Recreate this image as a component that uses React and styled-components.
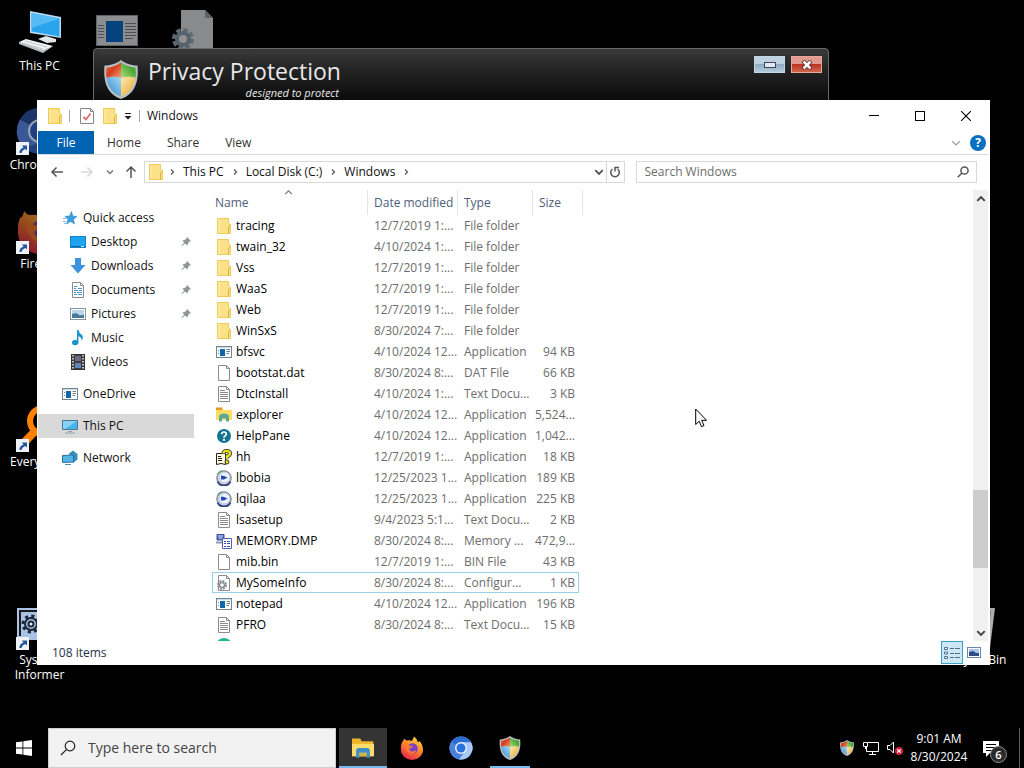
import React from 'react'
import styled, { createGlobalStyle } from 'styled-components'

const GlobalStyle = createGlobalStyle`
  * {
    box-sizing: border-box;
  }

  body {
    margin: 0;
    background: #000;
    overflow: hidden;
  }

  body, button, input, table {
    font-family: 'Segoe UI', 'Open Sans', sans-serif;
    font-size: 12px;
    line-height: 16px;
  }

  button {
    padding: 0;
    border: 0;
    background: none;
    color: inherit;
  }

  svg {
    display: block;
    flex: none;
  }
`

/* ---------- desktop ---------- */

const Screen = styled.div`
  height: 100vh;
  display: flex;
  flex-direction: column;
  background: #000;
`

const Desktop = styled.main`
  position: relative;
  flex: 1;
  min-height: 0;
  overflow: hidden;
`

const ShortcutGrid = styled.div`
  display: grid;
  grid-template-columns: 77px 77px 77px 1fr 76px;
  grid-auto-rows: 99px;
  padding: 8px 11px 0 1px;
`

const Shortcut = styled.button`
  grid-column: ${p => p.$col};
  grid-row: ${p => p.$row};
  display: flex;
  flex-direction: column;
  align-items: center;
  gap: 2px;
  align-self: start;
  color: #fff;
  line-height: 15px;
`

const ShortcutPicture = styled.span`
  position: relative;
  width: 48px;
  height: 48px;
`

const ShortcutArt = styled.span`
  display: block;
  opacity: ${p => (p.$faded ? 0.6 : 1)};
`

const LinkBadge = styled.span`
  position: absolute;
  left: 0;
  bottom: 0;
  width: 13px;
  height: 13px;
  background: #eef1f6;
`

/* ---------- privacy protection window ---------- */

const PrivacyWindow = styled.section`
  position: absolute;
  left: 93px;
  right: 195px;
  top: 48px;
  height: 120px;
  display: flex;
  align-items: flex-start;
  padding: 7px 6px 0 10px;
  border: 1px solid #6a6a6a;
  border-radius: 4px;
  background: linear-gradient(#3a3a3a, #242424 20px, #0c0c0c 50px);
`

const Brand = styled.div`
  flex: 1;
  display: flex;
  align-items: flex-start;
  gap: 10px;
`

const BrandText = styled.div`
  display: flex;
  flex-direction: column;
  color: #e8e8e8;
`

const BrandTitle = styled.h1`
  margin: 0;
  font-size: 23px;
  font-weight: 400;
  line-height: 30px;
`

const Tagline = styled.span`
  align-self: flex-end;
  padding-right: 2px;
  font-size: 11px;
  font-style: italic;
  line-height: 14px;
`

const GlassButton = styled.button`
  width: 31px;
  height: 17px;
  margin-left: 6px;
  display: flex;
  align-items: center;
  justify-content: center;
  border: 1px solid ${p => (p.$danger ? '#e9a79c' : '#c4d6e6')};
  background: ${p => (p.$danger
    ? 'linear-gradient(#e29a90 0 45%, #b93520 50%, #d4654f)'
    : 'linear-gradient(#bdd1e2 0 45%, #8fabc3 50%, #b4cbdd)')};
`

/* ---------- explorer window ---------- */

const ExplorerWindow = styled.section`
  position: absolute;
  left: 37px;
  right: 34px;
  top: 100px;
  bottom: 63px;
  display: flex;
  flex-direction: column;
  padding: 0 1px;
  background: #fff;
  color: #111;
`

const TitleBar = styled.header`
  height: 31px;
  display: flex;
  align-items: center;
`

const QuickTools = styled.div`
  flex: 1;
  display: flex;
  align-items: center;
  padding-left: 10px;
`

const Divider = styled.span`
  width: 1px;
  height: 12px;
  margin: ${p => p.$space || '0 7px'};
  background: #a6a6a6;
`

const ToolButton = styled.button`
  margin-right: ${p => p.$after || '0'};
`

const WindowTitle = styled.h2`
  margin: 0;
  font-size: 12px;
  font-weight: 400;
`

const CaptionButton = styled.button`
  width: 46px;
  height: 30px;
  display: flex;
  align-items: center;
  justify-content: center;
`

const Ribbon = styled.nav`
  height: 24px;
  display: flex;
  align-items: stretch;
  border-bottom: 1px solid #dedede;
`

const Tab = styled.button`
  padding: 0 13px;
  color: #333;
`

const FileTab = styled(Tab)`
  width: 56px;
  background: #0063b1;
  color: #fff;
`

const RibbonEnd = styled.div`
  flex: 1;
  display: flex;
  align-items: center;
  justify-content: flex-end;
  gap: 9px;
  padding-right: 3px;
`

const HelpButton = styled.button`
  width: 16px;
  height: 16px;
  border-radius: 50%;
  background: #0b6fc2;
  color: #fff;
  font-weight: 700;
`

const NavBar = styled.div`
  height: 35px;
  display: flex;
  align-items: center;
  padding: 0 12px 2px 12px;
`

const NavButton = styled.button`
  width: 14px;
  margin-right: ${p => p.$after || 0}px;
  display: flex;
  justify-content: center;
`

const AddressBar = styled.div`
  flex: 1 1 480px;
  height: 22px;
  display: flex;
  align-items: center;
  padding-left: 4px;
  border: 1px solid #d9d9d9;
`

const Crumbs = styled.div`
  flex: 1;
  display: flex;
  align-items: center;
  gap: 7px;
  padding-left: 5px;
`

const Fill = styled.span`
  flex: 1;
`

const RefreshButton = styled.button`
  width: 18px;
  height: 100%;
  margin-left: 2px;
  display: flex;
  align-items: center;
  justify-content: center;
  border-left: 1px solid #d9d9d9;
`

const FolderSearch = styled.label`
  flex: 1 1 341px;
  height: 22px;
  margin-left: 11px;
  display: flex;
  align-items: center;
  padding: 0 7px 0 8px;
  border: 1px solid #d9d9d9;
`

const SearchInput = styled.input`
  flex: 1;
  min-width: 0;
  padding: 0;
  border: 0;
  outline: 0;
  background: none;

  &::placeholder {
    color: #6d6d6d;
    opacity: 1;
  }
`

const Body = styled.div`
  flex: 1;
  min-height: 0;
  display: flex;
  overflow: hidden;
`

const Sidebar = styled.nav`
  width: 156px;
  margin-right: 18px;
  padding-top: 16px;
`

const Group = styled.div`
  margin-bottom: 8px;
`

const Place = styled.a`
  height: 24px;
  display: flex;
  align-items: center;
  gap: 5px;
  padding: 0 2px 0 ${p => (p.$nested ? 32 : 24)}px;
  background: ${p => (p.$active ? '#d9d9d9' : 'none')};
  color: #111;
  text-decoration: none;
`

const PlaceName = styled.span`
  flex: 1;
`

const FilePane = styled.div`
  flex: 1;
  min-width: 0;
  overflow: hidden;
`

const FileTable = styled.table`
  table-layout: fixed;
  width: 367px;
  border-collapse: separate;
  border-spacing: 0;
`

const HeadCell = styled.th`
  position: relative;
  width: ${p => p.$width}px;
  height: 25px;
  padding: 0 0 0 ${p => p.$indent || 6}px;
  color: #4c607a;
  font-weight: 400;
  text-align: left;
  white-space: nowrap;

  &::after {
    content: '';
    position: absolute;
    top: 0;
    bottom: 0;
    right: 0;
    border-right: 1px solid #e5e5e5;
  }

  &:last-child::after {
    right: -4px;
  }
`

const SortMark = styled.span`
  position: absolute;
  top: -2px;
  left: 72px;
`

const Cell = styled.td`
  height: 21px;
  padding: 0 0 0 6px;
  color: #6d6d6d;
  white-space: nowrap;
`

const NameCell = styled(Cell)`
  padding-left: 4px;
  color: #000;
`

const SizeCell = styled(Cell)`
  padding: 0 4px 0 0;
  text-align: right;
`

const FileName = styled.span`
  display: flex;
  align-items: center;
  gap: 4px;
`

const FileIcon = styled.span`
  width: 16px;
  height: 16px;
  display: flex;
  justify-content: center;
`

const Row = styled.tr`
  outline: ${p => (p.$focused ? '1px solid #99d1e8' : 'none')};
  outline-offset: -1px;
`

const ScrollBar = styled.div`
  width: 15px;
  display: flex;
  flex-direction: column;
  margin-right: 1px;
  background: #f0f0f0;
`

const ScrollArrow = styled.button`
  height: 17px;
  display: flex;
  align-items: center;
  justify-content: center;
`

const Track = styled.div`
  flex: 1;
  display: grid;
  grid-template-rows: 5fr 78px 1fr;
`

const Thumb = styled.div`
  grid-row: 2;
  background: #cdcdcd;
`

const StatusBar = styled.footer`
  height: 24px;
  display: flex;
  align-items: flex-start;
  padding: 0 4px 0 14px;
  color: #26324a;
  line-height: 24px;
`

const ViewButton = styled.button`
  width: 22px;
  height: 23px;
  display: flex;
  align-items: center;
  justify-content: center;
  border: 1px solid ${p => (p.$active ? '#3aa0c4' : 'transparent')};
  background: ${p => (p.$active ? '#cce8f6' : 'none')};
`

const Pointer = styled.span`
  position: absolute;
  left: 695px;
  top: 408px;
`

/* ---------- taskbar ---------- */

const Taskbar = styled.footer`
  height: 40px;
  display: flex;
  align-items: stretch;
  color: #fff;
`

const StartButton = styled.button`
  width: 48px;
  display: flex;
  align-items: center;
  justify-content: center;
`

const TaskSearch = styled.label`
  width: 288px;
  display: flex;
  align-items: center;
  gap: 12px;
  padding: 0 11px;
  border: 1px solid #cfcfcf;
  background: #f2f2f2;
  margin-right: 3px;

  input {
    font-size: 14px;
    line-height: 20px;
  }

  input::placeholder {
    color: #444;
  }
`

const Apps = styled.div`
  flex: 1;
  display: flex;
  gap: 1px;
`

const AppButton = styled.button`
  position: relative;
  width: 48px;
  display: flex;
  align-items: center;
  justify-content: center;
  background: ${p => (p.$active ? '#343434' : 'none')};

  &::after {
    content: '';
    position: absolute;
    left: ${p => (p.$active ? 0 : 4)}px;
    right: ${p => (p.$active ? 0 : 4)}px;
    bottom: 0;
    height: 2px;
    background: ${p => (p.$open ? '#76b9ed' : 'none')};
  }
`

const TrayButton = styled.button`
  width: 24px;
  display: flex;
  align-items: center;
  justify-content: center;
`

const Clock = styled.button`
  width: 64px;
  line-height: 18px;
`

const NoticeButton = styled.button`
  position: relative;
  width: 48px;
  padding-left: 12px;
`

const NoticeCount = styled.span`
  position: absolute;
  left: 19px;
  top: 18px;
  width: 17px;
  height: 17px;
  border: 1px solid #8a8a8a;
  border-radius: 50%;
  background: #2b2b2b;
  font-size: 11px;
  font-weight: 600;
  line-height: 15px;
`

const ShowDesktop = styled.button`
  width: 5px;
  border-left: 1px solid #5c5c5c;
`

/* ---------- drawings ---------- */

const Shield = ({ width, height }) => (
  <svg width={width} height={height} viewBox='0 0 34 39'>
    <defs>
      <clipPath id='shield-clip'>
        <path d='M17 2.500C22 6 27 7.500 31.500 7.500C33 21 29 32 17 36.500C5 32 1 21 2.500 7.500C7 7.500 12 6 17 2.500Z' />
      </clipPath>
      <linearGradient id='shield-red' x1='0' y1='0' x2='1' y2='1'>
        <stop offset='0' stopColor='#e98a72' /><stop offset='.5' stopColor='#d43c1c' /><stop offset='1' stopColor='#f5a27b' />
      </linearGradient>
      <linearGradient id='shield-green' x1='0' y1='1' x2='1' y2='0'>
        <stop offset='0' stopColor='#b2e08a' /><stop offset='.6' stopColor='#46a52b' /><stop offset='1' stopColor='#77bd4e' />
      </linearGradient>
      <linearGradient id='shield-blue' x1='1' y1='0' x2='0' y2='1'>
        <stop offset='0' stopColor='#a7daf5' /><stop offset='1' stopColor='#1977c2' />
      </linearGradient>
      <linearGradient id='shield-yellow' x1='0' y1='0' x2='1' y2='1'>
        <stop offset='0' stopColor='#fbeab0' /><stop offset='1' stopColor='#e69a1b' />
      </linearGradient>
    </defs>
    <path d='M17 0C22 4 28 5.500 33.500 5.500C35 22 31 34 17 39C3 34 -1 22 .5 5.500C6 5.500 12 4 17 0Z' fill='#b8c0c6' />
    <g clipPath='url(#shield-clip)'>
      <path d='M0 0H17V18Q8 15 0 19Z' fill='url(#shield-red)' />
      <path d='M17 0H34V19Q26 15 17 18Z' fill='url(#shield-green)' />
      <path d='M0 19Q8 15 17 18V39H0Z' fill='url(#shield-blue)' />
      <path d='M17 18Q26 15 34 19V39H17Z' fill='url(#shield-yellow)' />
    </g>
  </svg>
)

const Folder = () => (
  <svg width='14' height='16' viewBox='0 0 14 16'>
    <path d='M.5 .5H11.500V5L13.500 6.500V15.500H.5Z' fill='#fbe187' stroke='#efcb59' />
    <path d='M11.500 9V15.500M11.500 9L13.500 7' fill='none' stroke='#dcb23e' />
    <path d='M2 1V15' stroke='#fdeeb0' />
  </svg>
)

const PageShape = ({ children }) => (
  <svg width='16' height='16' viewBox='0 0 16 16'>
    <path d='M2.500 .5H10.500L13.500 3.500V15.500H2.500Z' fill='#fff' stroke='#8c8c8c' />
    <path d='M10.500 .5V3.500H13.500' fill='none' stroke='#8c8c8c' />
    {children}
  </svg>
)

const TextFile = () => (
  <PageShape>
    <path d='M4 4.500H9M4 6.500H12M4 8.500H12M4 10.500H12M4 12.500H12' stroke='#8a8a8a' />
  </PageShape>
)

const Gear = ({ size, fill, hole }) => (
  <svg width={size} height={size} viewBox='0 0 20 20'>
    <circle cx='10' cy='10' r='8' fill='none' stroke={fill} strokeWidth='3' strokeDasharray='3.140 3.140' />
    <circle cx='10' cy='10' r='6' fill={hole} stroke={fill} strokeWidth='2' />
    <circle cx='10' cy='10' r='2.500' fill='#e8eef6' stroke={fill} strokeWidth='2' />
  </svg>
)

const ConfigFile = () => (
  <PageShape>
    <circle cx='6' cy='10' r='4' fill='none' stroke='#8a9299' strokeWidth='2' strokeDasharray='2 1.140' />
    <circle cx='6' cy='10' r='2.500' fill='#fff' stroke='#8a9299' strokeWidth='1.500' />
  </PageShape>
)

const AppFile = () => (
  <svg width='16' height='16' viewBox='0 0 16 16'>
    <rect x='.5' y='2.500' width='15' height='11' fill='#fff' stroke='#6f8797' />
    <path d='M1 3.500H15' stroke='#cfd9e0' />
    <rect x='4' y='5' width='5' height='7' fill='#0f66a8' />
    <path d='M2 6.500H3M2 9.500H3M10.500 5.500H14M10.500 7.500H14M10.500 9.500H13' stroke='#6c7f8d' />
  </svg>
)

const ExplorerIcon = ({ size = 16 }) => (
  <svg width={size} height={size} viewBox='0 0 16 16'>
    <path d='M0 1H6L7 3H15.500V14H0Z' fill='#f0b429' />
    <path d='M0 5H16V14H0Z' fill='#fcdc6c' />
    <path d='M3 15V10Q3 8 5 8H11Q13 8 13 10V15H10.500V11.500H5.500V15Z' fill='#3d8fc5' />
    <rect x='5.500' y='11.500' width='5' height='2.500' fill='#d4b43d' />
  </svg>
)

const SmallExplorerIcon = () => (
  <svg width='16' height='16' viewBox='0 0 16 16'>
    <path d='M0 .5H6.500V4H0Z' fill='#e89a1d' />
    <path d='M0 3H16V13H0Z' fill='#fcdb62' />
    <path d='M3 14.500V10Q3 6.500 8 6.500Q13 6.500 13 10V14.500H10V11.500H6V14.500Z' fill='#5aa898' />
  </svg>
)

const HelpPaneIcon = () => (
  <svg width='16' height='16' viewBox='0 0 16 16'>
    <circle cx='8' cy='8' r='7' fill='#12768f' />
    <path d='M5.700 6.200Q5.800 4 8 4Q10.300 4 10.300 6Q10.300 7.200 9 7.900Q8 8.400 8 9.700' fill='none' stroke='#fff' strokeWidth='1.700' />
    <circle cx='8' cy='11.900' r='1.100' fill='#fff' />
  </svg>
)

const HhIcon = () => (
  <svg width='16' height='16' viewBox='0 0 16 16'>
    <path d='M.5 4.500H9.500V15.500L5 14.500L.5 15.500Z' fill='#fffbe0' stroke='#222' />
    <path d='M2 7.500H5M2 9.500H6M2 11.500H6' stroke='#222' />
    <path d='M7.500 4.500Q7.500 2 10.500 2Q14 2 14 4.500Q14 6.500 11 7.500V9.500' fill='none' stroke='#333' strokeWidth='4' />
    <path d='M7.500 4.500Q7.500 2 10.500 2Q14 2 14 4.500Q14 6.500 11 7.500V9.500' fill='none' stroke='#e8e116' strokeWidth='2.400' />
    <circle cx='11' cy='13' r='2' fill='#e8e116' stroke='#333' />
  </svg>
)

const DiscIcon = () => (
  <svg width='16' height='16' viewBox='0 0 16 16'>
    <circle cx='8' cy='8' r='7.200' fill='#c3cede' stroke='#69728a' />
    <path d='M1.500 4.500A7.200 7.200 0 0 1 6 1.100' fill='none' stroke='#5d9a7c' strokeWidth='1.500' />
    <path d='M1.500 11.500A7.200 7.200 0 0 0 14.500 11.500' fill='none' stroke='#34447c' strokeWidth='1.800' />
    <circle cx='8.500' cy='7.500' r='4.800' fill='#eef3fc' />
    <path d='M5 5.500L8 6L11.500 7.500L8 9.500L5 9.500Z' fill='#2446b8' />
  </svg>
)

const DumpIcon = () => (
  <svg width='16' height='16' viewBox='0 0 16 16'>
    <path d='M1 1.500H8V7H1Z' fill='#5b77c4' stroke='#38509c' />
    <path d='M0 9.500H6' stroke='#8d99ad' strokeWidth='2' />
    <path d='M2 3H7M3 5H6' stroke='#c8d4f4' />
    <path d='M6.500 5.500H15.500V15.500H6.500Z' fill='#fff' stroke='#5062ac' />
    <path d='M8 8.500H10M11 8.500H14M8 10.500H10M11 10.500H14M8 13.500H10M11 13.500H14' stroke='#3b4fa5' />
  </svg>
)

const TealIcon = () => (
  <svg width='16' height='16' viewBox='0 0 16 16'>
    <circle cx='8' cy='8' r='8' fill='#24b39b' />
  </svg>
)

const Star = () => (
  <svg width='16' height='16' viewBox='0 0 16 16'>
    <path d='M9.500 1.500L10.800 6L15 6.500L11.500 9.300L12.500 14L8.500 11.500L4.500 14L6 9.500L3 6.300L7.500 6Z' fill='#3d9fe0' stroke='#1f7fc4' strokeWidth='.5' />
    <path d='M1 8.500H4M1 11.500H4M2 13.500H4' stroke='#7dbdea' />
  </svg>
)

const DesktopIcon = () => (
  <svg width='16' height='16' viewBox='0 0 16 16'>
    <rect x='.5' y='2.500' width='15' height='11' fill='#1ea3ee' stroke='#1683c6' />
    <path d='M1 12.500H15' stroke='#10649b' />
    <path d='M11 12.500H14' stroke='#cfeaff' />
  </svg>
)

const DownloadIcon = () => (
  <svg width='16' height='16' viewBox='0 0 16 16'>
    <path d='M5 0H11V7H15.500L8 15.500L.5 7H5Z' fill='#3b93dc' />
  </svg>
)

const DocumentIcon = () => (
  <PageShape>
    <path d='M4 4.500H7M8 6.500H12M4 6.500H6M4 8.500H8M9 8.500H12M4 10.500H6M7 10.500H12M4 12.500H7M8 12.500H12' stroke='#4a97c9' />
  </PageShape>
)

const PictureIcon = () => (
  <svg width='16' height='16' viewBox='0 0 16 16'>
    <rect x='.5' y='2.500' width='15' height='11' fill='#fff' stroke='#8196a5' />
    <rect x='2' y='4' width='12' height='8' fill='#b9d6ea' />
    <path d='M2 8L6 7L10 9.500L14 8.500V12H2Z' fill='#4a7898' />
  </svg>
)

const MusicIcon = () => (
  <svg width='16' height='16' viewBox='0 0 16 16'>
    <path d='M7 0H8.500Q9 3 12 5Q14 7.500 11.500 11Q12 7.500 8.500 6V12.500A3.300 2.700 0 1 1 7 10.300Z' fill='#1b94d1' />
  </svg>
)

const VideoIcon = () => (
  <svg width='16' height='16' viewBox='0 0 16 16'>
    <rect x='1.500' y='.5' width='13' height='15' fill='#3c3c40' stroke='#333' />
    <path d='M3 1V15M13 1V15' stroke='#e8e8e8' strokeWidth='1.500' strokeDasharray='1.500 1.500' />
    <rect x='5' y='2' width='6' height='5' fill='#6e6a86' />
    <rect x='5' y='9' width='6' height='5' fill='#5f87b5' />
  </svg>
)

const ComputerIcon = () => (
  <svg width='16' height='16' viewBox='0 0 16 16'>
    <path d='M.5 2.500H15.500V11.500H.5Z' fill='#45b5ee' stroke='#4a7896' />
    <path d='M1 3H15L3 11H1Z' fill='#86d2f7' />
    <path d='M6 13.500H10M3 15H13' stroke='#8aa0ae' />
  </svg>
)

const NetworkIcon = () => (
  <svg width='16' height='16' viewBox='0 0 16 16'>
    <path d='M7 3.500L11 .5L15.500 4V9.500L11 13Z' fill='#3a8ebd' />
    <path d='M.5 5.500L11.500 5V12L.5 12.500Z' fill='#52b4e6' stroke='#2d7099' />
    <path d='M3 14.500H9' stroke='#5b8aa6' />
  </svg>
)

const Pin = () => (
  <svg width='12' height='12' viewBox='0 0 12 12'>
    <path d='M7 1L11 5L9.500 5.500L8 7.500L7.500 9.500L5 7.500L1 11L4 6.500L2.500 4.500L4.500 4L6.500 2.500Z' fill='#8e959b' />
  </svg>
)

const chevronPaths = {
  right: 'M3 1.500L5.500 4L3 6.500',
  down: 'M1 2.500L4 5.500L7 2.500',
  up: 'M1 5.500L4 2.500L7 5.500'
}

const Chevron = ({ dir = 'right', size = 8, color = '#555', weight = 1.2 }) => (
  <svg width={size} height={size} viewBox='0 0 8 8'>
    <path d={chevronPaths[dir]} fill='none' stroke={color} strokeWidth={weight} />
  </svg>
)

const Arrow = ({ turn = 0, color = '#555' }) => (
  <svg width='14' height='14' viewBox='0 0 14 14'>
    <path d='M13 7H2M6.500 2.500L2 7L6.500 11.500' transform={`rotate(${turn} 7 7)`} fill='none' stroke={color} strokeWidth='1.500' />
  </svg>
)

const Magnifier = ({ size, color, weight = 1.5 }) => (
  <svg width={size} height={size} viewBox='0 0 16 16'>
    <circle cx='10' cy='6' r='4.800' fill='none' stroke={color} strokeWidth={weight} />
    <path d='M6.600 9.400L1 15' stroke={color} strokeWidth={weight} />
  </svg>
)

const Chromium = ({ size }) => (
  <svg width={size} height={size} viewBox='0 0 48 48'>
    <circle cx='24' cy='24' r='23' fill='#6aa0ee' />
    <path d='M24 24L4 12.500A23 23 0 0 1 44 12.500H24Z' fill='#2f6bd0' />
    <path d='M24 24L4 12.500A23 23 0 0 0 20 46.600L30 32Z' fill='#4a80da' />
    <path d='M24 12.500H44A23 23 0 0 1 20 46.600L32 32Z' fill='#a9c8f7' />
    <circle cx='24' cy='24' r='12' fill='#e6effc' />
    <circle cx='24' cy='24' r='9' fill='#2a72dc' />
  </svg>
)

const Firefox = ({ size }) => (
  <svg width={size} height={size} viewBox='0 0 48 48'>
    <defs>
      <linearGradient id='fox-fire' x1='.8' y1='0' x2='.3' y2='1'>
        <stop offset='0' stopColor='#ffe14a' /><stop offset='.45' stopColor='#ff8a2a' /><stop offset='1' stopColor='#e8234f' />
      </linearGradient>
    </defs>
    <path d='M4 12Q7 11 8 5Q11 9 14 9Q19 8 23 10Q27 6 28 1Q35 6 36 13L39 10Q46 18 46 27A22 21 0 0 1 2 27Q1 19 4 12Z' fill='url(#fox-fire)' />
    <circle cx='25' cy='25' r='10.500' fill='#7a3fc4' />
    <path d='M10 20Q18 17 22 20L27 19Q24 24 19 25Q17 30 24 31Q29 31 32 28Q32 35 24 36Q13 35 10 20Z' fill='#ff7a2e' />
  </svg>
)

const ThisPcArt = () => (
  <svg width='48' height='48' viewBox='0 0 48 48'>
    <path d='M14 3L45 9V30L14 25Z' fill='#b9dcef' />
    <path d='M15.500 5L43.500 10.500V28.500L15.500 23.500Z' fill='#2ba4ee' />
    <path d='M15.500 5L43.500 10.500L15.500 20Z' fill='#56bbf5' />
    <path d='M22 31L30 28L40 31V34L31 35Z' fill='#dfe7eb' />
    <path d='M3 34L10 31L37 38L27 44Z' fill='#f1f2f2' />
    <path d='M3 34L27 42L37 38L27 45L3 36Z' fill='#b8bec2' />
    <path d='M9 33L31 39M7 35L27 41' stroke='#c3c8cb' />
  </svg>
)

const DarkChromiumArt = () => (
  <svg width='48' height='48' viewBox='0 0 48 48'>
    <circle cx='24' cy='24' r='23' fill='#233f7c' />
    <path d='M24 24L4 12.500A23 23 0 0 1 44 12.500H24Z' fill='#1c3468' />
    <path d='M24 24L4 12.500A23 23 0 0 0 8 41L24 36Z' fill='#3a5896' />
    <circle cx='24' cy='24' r='11' fill='#20407f' stroke='#98a2b4' strokeWidth='2' />
  </svg>
)

const PageArt = () => (
  <svg width='48' height='48' viewBox='0 0 48 48'>
    <path d='M11 2H35L43 10V48H11Z' fill='#e4e6e8' />
    <path d='M35 2V10H43Z' fill='#9ea3a8' />
    <circle cx='13' cy='31' r='8' fill='none' stroke='#9db0c1' strokeWidth='6' strokeDasharray='4 2.280' />
    <circle cx='13' cy='31' r='6' fill='#eef2f5' stroke='#8da3b6' strokeWidth='4' />
  </svg>
)

const AppArt = () => (
  <svg width='48' height='48' viewBox='0 0 48 48'>
    <rect x='3.500' y='7.500' width='41' height='30' fill='#e8eaec' stroke='#9aa7b0' />
    <rect x='13' y='13' width='17' height='21' fill='#0a6ed1' />
    <path d='M5 17.500H11M5 20.500H11M5 23.500H11M5 26.500H11M5 29.500H11M32 15.500H43M32 18.500H43M32 21.500H43M32 24.500H43M32 27.500H43M32 30.500H40' stroke='#7a848c' />
  </svg>
)

const EverythingArt = () => (
  <svg width='48' height='48' viewBox='0 0 48 48'>
    <circle cx='27' cy='17' r='13' fill='none' stroke='#ff8000' strokeWidth='6' />
    <path d='M19 27L5 42' stroke='#ff8000' strokeWidth='8' />
  </svg>
)

const InformerArt = () => (
  <svg width='48' height='48' viewBox='0 0 48 48'>
    <rect x='1' y='6' width='44' height='32' fill='#a9c2e6' />
    <path d='M4 34V9H44' fill='none' stroke='#1a1a1a' strokeWidth='2' />
    <g transform='translate(5 12)'><Gear size={20} fill='#1b2636' hole='#a9c2e6' /></g>
  </svg>
)

const BinArt = () => (
  <svg width='48' height='48' viewBox='0 0 48 48'>
    <path d='M6 6H44L39 46H11Z' fill='#a9adb0' />
    <path d='M9 9H40L36 43H13Z' fill='#6f7478' />
  </svg>
)

const CheckPage = () => (
  <svg width='14' height='16' viewBox='0 0 14 16'>
    <path d='M.5 .5H10.500L13.500 3.500V15.500H.5Z' fill='#fff' stroke='#868686' />
    <path d='M10.500 .5V3.500H13.500' fill='none' stroke='#868686' />
    <path d='M3.500 9L6 11.500L10.500 5.500' fill='none' stroke='#dc6a66' strokeWidth='1.800' />
  </svg>
)

const WindowsLogo = () => (
  <svg width='16' height='16' viewBox='0 0 16 16'>
    <path d='M0 2.300L6.500 1.400V7.600H0ZM7.300 1.300L16 0V7.600H7.300ZM0 8.400H6.500V14.600L0 13.700ZM7.300 8.400H16V16L7.300 14.700Z' fill='#fff' />
  </svg>
)

/* ---------- data ---------- */

const files = [
  [Folder, 'tracing', '12/7/2019 1:...', 'File folder', ''],
  [Folder, 'twain_32', '4/10/2024 1:...', 'File folder', ''],
  [Folder, 'Vss', '12/7/2019 1:...', 'File folder', ''],
  [Folder, 'WaaS', '12/7/2019 1:...', 'File folder', ''],
  [Folder, 'Web', '12/7/2019 1:...', 'File folder', ''],
  [Folder, 'WinSxS', '8/30/2024 7:...', 'File folder', ''],
  [AppFile, 'bfsvc', '4/10/2024 12...', 'Application', '94 KB'],
  [PageShape, 'bootstat.dat', '8/30/2024 8:...', 'DAT File', '66 KB'],
  [TextFile, 'DtcInstall', '4/10/2024 1:...', 'Text Docu...', '3 KB'],
  [SmallExplorerIcon, 'explorer', '4/10/2024 12...', 'Application', '5,524...'],
  [HelpPaneIcon, 'HelpPane', '4/10/2024 12...', 'Application', '1,042...'],
  [HhIcon, 'hh', '12/7/2019 1:...', 'Application', '18 KB'],
  [DiscIcon, 'lbobia', '12/25/2023 1...', 'Application', '189 KB'],
  [DiscIcon, 'lqilaa', '12/25/2023 1...', 'Application', '225 KB'],
  [TextFile, 'lsasetup', '9/4/2023 5:1...', 'Text Docu...', '2 KB'],
  [DumpIcon, 'MEMORY.DMP', '8/30/2024 8:...', 'Memory ...', '472,9...'],
  [PageShape, 'mib.bin', '12/7/2019 1:...', 'BIN File', '43 KB'],
  [ConfigFile, 'MySomeInfo', '8/30/2024 8:...', 'Configur...', '1 KB'],
  [AppFile, 'notepad', '4/10/2024 12...', 'Application', '196 KB'],
  [TextFile, 'PFRO', '8/30/2024 8:...', 'Text Docu...', '15 KB'],
  [TealIcon, '', '', '', '']
]

const places = [
  [
    { name: 'Quick access', icon: Star },
    { name: 'Desktop', icon: DesktopIcon, nested: true, pinned: true },
    { name: 'Downloads', icon: DownloadIcon, nested: true, pinned: true },
    { name: 'Documents', icon: DocumentIcon, nested: true, pinned: true },
    { name: 'Pictures', icon: PictureIcon, nested: true, pinned: true },
    { name: 'Music', icon: MusicIcon, nested: true },
    { name: 'Videos', icon: VideoIcon, nested: true }
  ],
  [{ name: 'OneDrive', icon: AppFile }],
  [{ name: 'This PC', icon: ComputerIcon, active: true }],
  [{ name: 'Network', icon: NetworkIcon }]
]

const shortcuts = [
  { name: 'This PC', art: <ThisPcArt />, col: 1, row: 1 },
  { name: 'Chromium', art: <DarkChromiumArt />, col: 1, row: 2, link: true },
  { name: 'Firefox', art: <Firefox size={48} />, col: 1, row: 3, link: true, faded: true },
  { name: 'Everything', art: <EverythingArt />, col: 1, row: 5, link: true },
  { name: 'System Informer', art: <InformerArt />, col: 1, row: 7, link: true },
  { art: <AppArt />, col: 2, row: 1, faded: true },
  { art: <PageArt />, col: 3, row: 1, faded: true },
  { name: 'Recycle Bin', art: <BinArt />, col: 5, row: 7 }
]

/* ---------- parts ---------- */

const DesktopIcons = () => (
  <ShortcutGrid>
    {shortcuts.map(s => (
      <Shortcut key={`${s.col}-${s.row}`} $col={s.col} $row={s.row}>
        <ShortcutPicture>
          <ShortcutArt $faded={s.faded}>{s.art}</ShortcutArt>
          {s.link && (
            <LinkBadge>
              <svg width='13' height='13' viewBox='0 0 13 13'>
                <path d='M3.500 11Q3 7 7.500 5.500L6 3.500H11V8.500L9.500 7Q6 8 5.500 11Z' fill='#23549b' />
              </svg>
            </LinkBadge>
          )}
        </ShortcutPicture>
        {s.name}
      </Shortcut>
    ))}
  </ShortcutGrid>
)

const PrivacyProtection = () => (
  <PrivacyWindow>
    <Brand>
      <svg width='34' height='46' viewBox='0 0 34 46'>
        <g transform='translate(0 4)'><Shield width={34} height={39} /></g>
      </svg>
      <BrandText>
        <BrandTitle>Privacy Protection</BrandTitle>
        <Tagline>designed to protect</Tagline>
      </BrandText>
    </Brand>
    <GlassButton aria-label='Minimize'>
      <svg width='12' height='6' viewBox='0 0 12 6'>
        <rect x='.5' y='.5' width='11' height='5' fill='#dfe9f2' stroke='#445' />
      </svg>
    </GlassButton>
    <GlassButton $danger aria-label='Close'>
      <svg width='12' height='10' viewBox='0 0 12 10'>
        <path d='M2 1L10 9M10 1L2 9' stroke='#4a2420' strokeWidth='4' />
        <path d='M2.500 1.500L9.500 8.500M9.500 1.500L2.500 8.500' stroke='#fff' strokeWidth='2.500' />
      </svg>
    </GlassButton>
  </PrivacyWindow>
)

const FileList = () => (
  <FilePane>
    <FileTable>
      <thead>
        <tr>
          <HeadCell $width={156} $indent={3}>
            Name
            <SortMark><Chevron dir='up' size={9} color='#777' weight={1} /></SortMark>
          </HeadCell>
          <HeadCell $width={90}>Date modified</HeadCell>
          <HeadCell $width={75}>Type</HeadCell>
          <HeadCell $width={46}>Size</HeadCell>
        </tr>
      </thead>
      <tbody>
        {files.map(([Icon, name, date, type, size], i) => (
          <Row key={i} $focused={name === 'MySomeInfo'}>
            <NameCell><FileName><FileIcon><Icon /></FileIcon>{name}</FileName></NameCell>
            <Cell>{date}</Cell>
            <Cell>{type}</Cell>
            <SizeCell>{size}</SizeCell>
          </Row>
        ))}
      </tbody>
    </FileTable>
  </FilePane>
)

const Explorer = () => (
  <ExplorerWindow>
    <TitleBar>
      <QuickTools>
        <Folder />
        <Divider $space='0 10px 0 7px' />
        <ToolButton $after='9px' aria-label='Properties'><CheckPage /></ToolButton>
        <ToolButton $after='7px' aria-label='New folder'><Folder /></ToolButton>
        <ToolButton aria-label='Customize'>
          <svg width='8' height='8' viewBox='0 0 8 8'>
            <path d='M1 1.500H7' stroke='#222' />
            <path d='M.5 4H7.500L4 7.500Z' fill='#222' />
          </svg>
        </ToolButton>
        <Divider />
        <WindowTitle>Windows</WindowTitle>
      </QuickTools>
      <CaptionButton aria-label='Minimize'>
        <svg width='10' height='10' viewBox='0 0 10 10'><path d='M0 4.500H10' stroke='#000' /></svg>
      </CaptionButton>
      <CaptionButton aria-label='Maximize'>
        <svg width='10' height='10' viewBox='0 0 10 10'><rect x='.5' y='.5' width='9' height='9' fill='none' stroke='#000' /></svg>
      </CaptionButton>
      <CaptionButton aria-label='Close'>
        <svg width='10' height='10' viewBox='0 0 10 10'><path d='M0 0L10 10M10 0L0 10' stroke='#000' strokeWidth='1.100' /></svg>
      </CaptionButton>
    </TitleBar>

    <Ribbon>
      <FileTab>File</FileTab>
      <Tab>Home</Tab>
      <Tab>Share</Tab>
      <Tab>View</Tab>
      <RibbonEnd>
        <Chevron dir='down' size={10} color='#999' weight={1} />
        <HelpButton>?</HelpButton>
      </RibbonEnd>
    </Ribbon>

    <NavBar>
      <NavButton $after={16} aria-label='Back'><Arrow /></NavButton>
      <NavButton $after={9} aria-label='Forward'><Arrow turn={180} color='#d8d8d8' /></NavButton>
      <NavButton $after={7} aria-label='Recent'><Chevron dir='down' color='#777' weight={1.5} /></NavButton>
      <NavButton $after={6} aria-label='Up'><Arrow turn={90} /></NavButton>
      <AddressBar>
        <Folder />
        <Crumbs>
          <Chevron />
          <button>This PC</button>
          <Chevron />
          <button>Local Disk (C:)</button>
          <Chevron />
          <button>Windows</button>
          <Chevron />
        </Crumbs>
        <Chevron dir='down' size={10} color='#555' weight={1.5} />
        <RefreshButton aria-label='Refresh'>
          <svg width='12' height='12' viewBox='0 0 12 12'>
            <path d='M3.500 3A4.300 4.300 0 1 0 8.500 3' fill='none' stroke='#555' strokeWidth='1.500' />
            <path d='M2 1.500H6V5.500' fill='none' stroke='#555' strokeWidth='1.500' transform='translate(12 0) scale(-1 1)' />
          </svg>
        </RefreshButton>
      </AddressBar>
      <FolderSearch>
        <SearchInput placeholder='Search Windows' aria-label='Search Windows' />
        <Magnifier size={12} color='#555' weight={2} />
      </FolderSearch>
    </NavBar>

    <Body>
      <Sidebar>
        {places.map((group, i) => (
          <Group key={i}>
            {group.map(({ name, icon: Icon, nested, pinned, active }) => (
              <Place key={name} href='#' $nested={nested} $active={active}>
                <Icon />
                <PlaceName>{name}</PlaceName>
                {pinned && <Pin />}
              </Place>
            ))}
          </Group>
        ))}
      </Sidebar>
      <FileList />
      <ScrollBar>
        <ScrollArrow aria-label='Scroll up'><Chevron dir='up' size={10} color='#444' weight={1.6} /></ScrollArrow>
        <Track><Thumb /></Track>
        <ScrollArrow aria-label='Scroll down'><Chevron dir='down' size={10} color='#444' weight={1.6} /></ScrollArrow>
      </ScrollBar>
    </Body>

    <StatusBar>
      <span>108 items</span>
      <Fill />
      <ViewButton $active aria-label='Details view'>
        <svg width='18' height='14' viewBox='0 0 18 14'>
          <path d='M1.500 1.500H4.500V3.500H1.500ZM1.500 6H4.500V8H1.500ZM1.500 10.500H4.500V12.500H1.500Z' fill='#fff' stroke='#4f6f94' />
          <path d='M7 2.500H11M12 2.500H17M7 7.500H11M12 7.500H17M7 11.500H11M12 11.500H17' stroke='#5b6b7d' />
        </svg>
      </ViewButton>
      <ViewButton aria-label='Large icons'>
        <svg width='14' height='11' viewBox='0 0 14 11'>
          <rect x='.5' y='.5' width='13' height='10' fill='#fff' stroke='#6c86a8' />
          <rect x='2' y='2' width='10' height='7' fill='#a7c6ea' />
          <path d='M2 5L6 4L9 6H12V9H2Z' fill='#2f4c86' />
        </svg>
      </ViewButton>
    </StatusBar>
  </ExplorerWindow>
)

const BottomBar = () => (
  <Taskbar>
    <StartButton aria-label='Start'><WindowsLogo /></StartButton>
    <TaskSearch>
      <Magnifier size={16} color='#222' weight={1.2} />
      <SearchInput placeholder='Type here to search' aria-label='Type here to search' />
    </TaskSearch>
    <Apps>
      <AppButton $active $open aria-label='File Explorer'><ExplorerIcon size={22} /></AppButton>
      <AppButton aria-label='Firefox'><Firefox size={24} /></AppButton>
      <AppButton aria-label='Chromium'><Chromium size={24} /></AppButton>
      <AppButton $open aria-label='Privacy Protection'><Shield width={22} height={24} /></AppButton>
    </Apps>
    <TrayButton aria-label='Protection'><Shield width={14} height={16} /></TrayButton>
    <TrayButton aria-label='Network'>
      <svg width='16' height='16' viewBox='0 0 16 16'>
        <path d='M5 2.500H15.500V11.500H3.500V7M9.500 12V14.500M6 14.500H13' fill='none' stroke='#fff' />
        <path d='M.5 2.500H4.500V6.500H.5ZM2.500 7V9' fill='#000' stroke='#fff' />
      </svg>
    </TrayButton>
    <TrayButton aria-label='Volume muted'>
      <svg width='16' height='16' viewBox='0 0 16 16'>
        <path d='M.5 5.500H3L6.500 2V13L3 9.500H.5Z' fill='none' stroke='#fff' />
        <circle cx='12' cy='11' r='4' fill='#d3243b' />
        <path d='M10.300 9.300L13.700 12.700M13.700 9.300L10.300 12.700' stroke='#fff' strokeWidth='1.200' />
      </svg>
    </TrayButton>
    <Clock>9:01 AM<br />8/30/2024</Clock>
    <NoticeButton aria-label='Notifications'>
      <svg width='17' height='17' viewBox='0 0 17 17'>
        <path d='M0 1H16V13H7L3 17V13H0Z' fill='#fff' />
        <path d='M3 4.500H13M3 7.500H13M3 10.500H9' stroke='#000' />
      </svg>
      <NoticeCount>6</NoticeCount>
    </NoticeButton>
    <ShowDesktop aria-label='Show desktop' />
  </Taskbar>
)

export default function App() {
  return (
    <Screen>
      <GlobalStyle />
      <Desktop>
        <DesktopIcons />
        <PrivacyProtection />
        <Explorer />
        <Pointer>
          <svg width='13' height='20' viewBox='0 0 13 20'>
            <path d='M.7 1V16.500L4.200 13.200L6.500 18.700L9 17.600L6.700 12.300H11.500Z' fill='#fff' stroke='#000' />
          </svg>
        </Pointer>
      </Desktop>
      <BottomBar />
    </Screen>
  )
}
